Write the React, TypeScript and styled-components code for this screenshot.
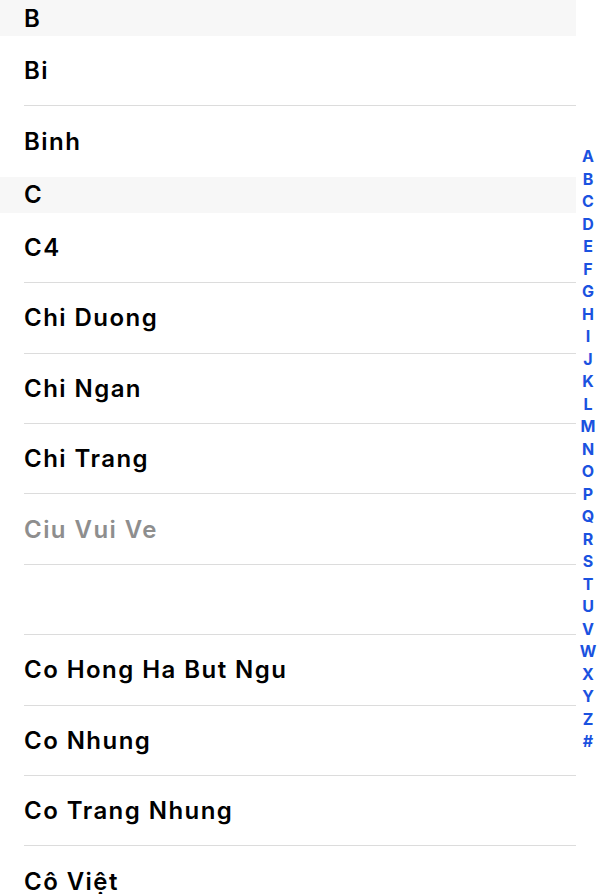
import React from 'react';
import styled, { createGlobalStyle } from 'styled-components';

type Section = {
    letter: string;
    contacts: { name: string; muted?: boolean }[];
};

const sections: Section[] = [
    { letter: 'B', contacts: [{ name: 'Bi' }, { name: 'Binh' }] },
    {
        letter: 'C',
        contacts: [
            { name: 'C4' },
            { name: 'Chi Duong' },
            { name: 'Chi Ngan' },
            { name: 'Chi Trang' },
            { name: 'Ciu Vui Ve', muted: true },
            { name: '' },
            { name: 'Co Hong Ha But Ngu' },
            { name: 'Co Nhung' },
            { name: 'Co Trang Nhung' },
            { name: 'Cô Việt' },
        ],
    },
];

const indexLetters = 'ABCDEFGHIJKLMNOPQRSTUVWXYZ#'.split('');

const App: React.FC = () => {
    return (
        <>
            <GlobalStyle />
            <Screen>
                <List>
                    {sections.map((section) => (
                        <div key={section.letter}>
                            <SectionHeader>{section.letter}</SectionHeader>
                            {section.contacts.map((c, i) => (
                                <Row key={i} $last={i === section.contacts.length - 1}>
                                    <Name $muted={c.muted}>{c.name}</Name>
                                </Row>
                            ))}
                        </div>
                    ))}
                </List>
                <IndexBar>
                    {indexLetters.map((l) => (
                        <IndexLetter key={l}>{l}</IndexLetter>
                    ))}
                </IndexBar>
            </Screen>
        </>
    );
};

const GlobalStyle = createGlobalStyle`
    html, body {
        margin: 0;
        padding: 0;
        background: #ffffff;
    }
    body {
        font-family: Inter, "Liberation Sans", Arial, sans-serif;
        -webkit-font-smoothing: antialiased;
    }
`;

// whole screen: list on the left, index column on the right
const Screen = styled.div`
    display: flex;
    flex-direction: row;
    width: 600px;
    height: 894px;
    overflow: hidden;
`;

const List = styled.div`
    width: 576px;
    flex-shrink: 0;
    height: 100%;
    overflow: hidden;
`;

const SectionHeader = styled.div`
    height: 36px;
    display: flex;
    align-items: center;
    padding-left: 24px;
    background-color: #f7f7f7;
    color: #000;
    font-size: 24px;
    font-weight: 600;
`;

const Row = styled.div<{ $last?: boolean }>`
    height: 70.4px;
    margin-left: 24px;
    display: flex;
    align-items: center;
    box-sizing: border-box;
    border-bottom: ${(p) => (p.$last ? 'none' : '1px solid #dcdcdc')};
`;

const Name = styled.span<{ $muted?: boolean }>`
    font-size: 24px;
    font-weight: 600;
    letter-spacing: 1.45px;
    color: ${(p) => (p.$muted ? '#8e8e8e' : '#000')};
`;

const IndexBar = styled.div`
    flex: 1;
    display: flex;
    flex-direction: column;
    align-items: center;
    justify-content: center;
    padding-top: 4px;
`;

const IndexLetter = styled.div`
    height: 22.5px;
    line-height: 22.5px;
    font-size: 16px;
    font-weight: 700;
    color: #1a52e0;
`;

export default App;
